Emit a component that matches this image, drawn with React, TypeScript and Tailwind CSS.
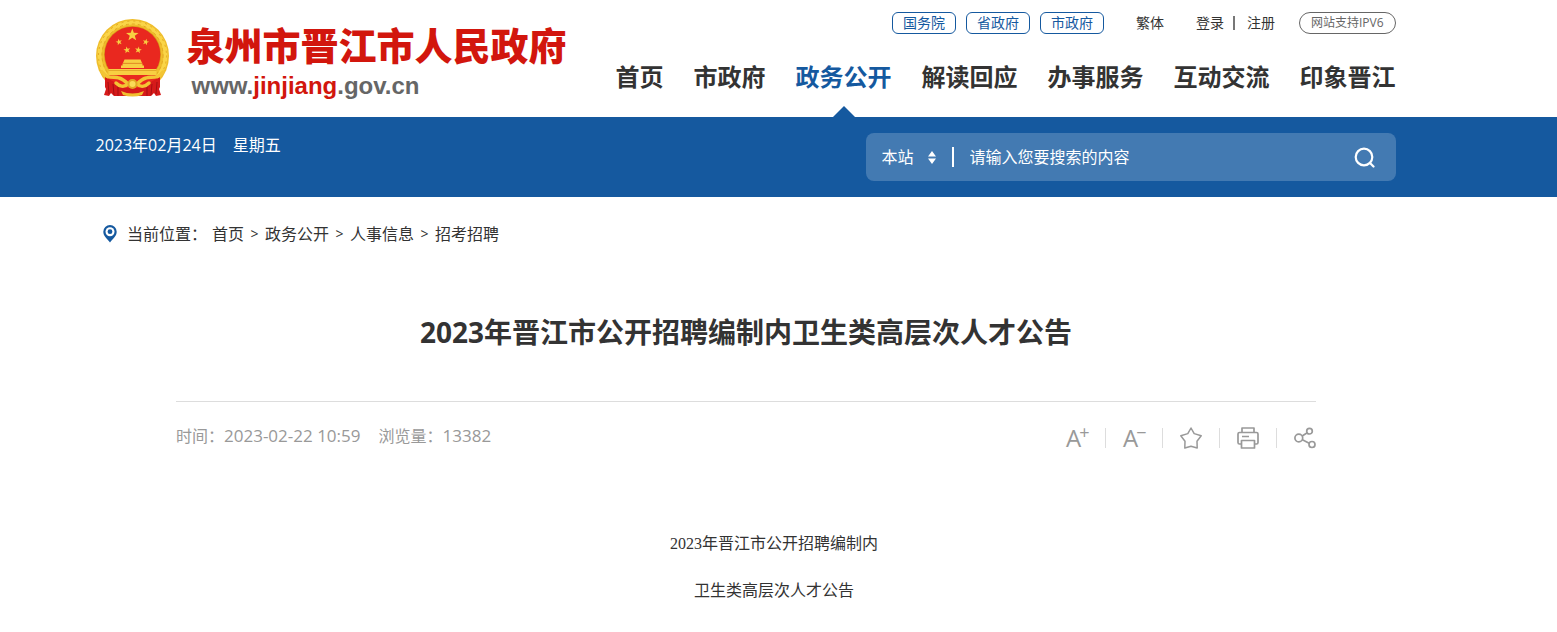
import { useState } from 'react'

const NAV = ['首页', '市政府', '政务公开', '解读回应', '办事服务', '互动交流', '印象晋江']
const GOV_LINKS = ['国务院', '省政府', '市政府']
const CRUMBS = ['首页', '政务公开', '人事信息', '招考招聘']

const STAR = 'M0 -1 L.235 -.324 L.951 -.309 L.38 .124 L.588 .809 L0 .4 L-.588 .809 L-.38 .124 L-.951 -.309 L-.235 -.324 Z'

function Emblem() {
  return (
    <svg viewBox="0 0 74 80" className="h-20 w-[74px] shrink-0" aria-hidden="true">
      {/* wheat ring */}
      <ellipse cx="36.5" cy="38" rx="36.5" ry="37" fill="#efbd2b" />
      <ellipse cx="36.5" cy="37.5" rx="33" ry="33" fill="none" stroke="#fad548" strokeWidth="4" />
      <ellipse cx="36.5" cy="37.5" rx="34" ry="34.5" fill="none" stroke="#e3a923" strokeWidth="1" strokeDasharray="2 4" />
      <ellipse cx="36.5" cy="37" rx="30.5" ry="31" fill="none" stroke="#e3a923" strokeWidth="1" strokeDasharray="3 3" />
      <circle cx="36.5" cy="36.5" r="28.5" fill="#d99a1c" />
      <circle cx="36.5" cy="36.5" r="27.8" fill="#e9281f" />
      <g fill="#f8cf42">
        <path d={STAR} transform="translate(36.3 17) scale(6.6)" />
        <path d={STAR} transform="translate(23 24) rotate(-15) scale(3.4)" />
        <path d={STAR} transform="translate(49.8 24) rotate(15) scale(3.4)" />
        <path d={STAR} transform="translate(31 32) rotate(-10) scale(3.6)" />
        <path d={STAR} transform="translate(42.3 32) rotate(10) scale(3.6)" />
        {/* gate */}
        <path d="M28.500 41.500h16l1.500 3.500h-19zM26.500 45.500h20v2h1.500v2.500H25v-2.500h1.500z" />
        <path d="M12.500 51h48v6h-48z" />
      </g>
      <path d="M27 45.300h19M12.500 52.500h48" stroke="#dd9f24" strokeWidth=".8" />
      <path d="M10 57h53l-4 8-12 5H26l-12-5z" fill="#e9281f" />
      {/* ribbons */}
      <path d="M9 59l13 7 7 3 1 9H18l-3-3-2 3-5-1 2-6-1-2z" fill="#d61a1a" />
      <path d="M64 59l-13 7-7 3-1 9h12l3-3 2 3 5-1-2-6 1-2z" fill="#d61a1a" />
      <path d="M12 64l1 12M17 66l1 11M22 68v10M61 64l-1 12M56 66l-1 11M51 68v10" stroke="#a50f12" strokeWidth="1" />
      <path d="M27 70h19v8H27z" fill="#d61a1a" />
      <path
        d="M6 54c6 8 12 4 17 6 4 1 7 4 9 6-4 4-9 2-12-1M67 54c-6 8-12 4-17 6-4 1-7 4-9 6 4 4 9 2 12-1"
        fill="none"
        stroke="#f3c534"
        strokeWidth="3.500"
        strokeLinecap="round"
      />
      <circle cx="36.500" cy="66" r="5" fill="#e2a925" />
      <circle cx="36.500" cy="66" r="3" fill="#fadb58" />
      <path d="M25 73q11.500 5 23 0l-2 4q-9.500 3-19 0z" fill="#f0bf30" />
    </svg>
  )
}

function PinIcon() {
  return (
    <svg viewBox="0 0 14 18" className="h-[18px] w-3.5 shrink-0" aria-hidden="true">
      <path d="M7 0a6.7 6.7 0 0 1 6.7 6.7C13.7 11 10 13.500 7 17.500 4 13.500.3 11 .3 6.700A6.700 6.700 0 0 1 7 0z" fill="#15599f" />
      <circle cx="7" cy="6.700" r="4.500" fill="#fff" />
      <circle cx="7" cy="6.700" r="2.400" fill="#15599f" />
    </svg>
  )
}

function StarIcon() {
  return (
    <svg viewBox="0 0 22 22" className="size-[22px]" fill="none" stroke="#999" strokeWidth="1.500" strokeLinejoin="round" aria-hidden="true">
      <path d="M11 1 14.200 6.600 21.200 8.800 17 14.200 17.200 21 11 19.200 4.800 21 5 14.200 .8 8.800 7.800 6.600Z" />
    </svg>
  )
}

function PrintIcon() {
  return (
    <svg viewBox="0 0 22 22" className="size-[22px]" fill="none" stroke="#999" strokeWidth="1.700" strokeLinejoin="round" aria-hidden="true">
      <path d="M5 5.500V1h12v4.500M5 17H2.500Q1 17 1 15.500V7Q1 5.500 2.500 5.500h17Q21 5.500 21 7v8.500q0 1.500-1.500 1.500H17" />
      <path d="M4.500 13.500h13v7.500h-13zM5 9.500h7" />
    </svg>
  )
}

function ShareIcon() {
  return (
    <svg viewBox="0 0 22 22" className="size-[22px]" fill="none" stroke="#999" strokeWidth="1.700" aria-hidden="true">
      <circle cx="4.800" cy="11" r="3.900" />
      <circle cx="15.500" cy="4.200" r="2.800" />
      <circle cx="18" cy="17.500" r="3" />
      <path d="M8.200 9l5-3.300M8.400 12.700l6.800 3.500" />
    </svg>
  )
}

function Header() {
  return (
    <header className="pr-[66px]">
      <div className="mx-auto flex max-w-[1300px] justify-between">
        <a href="#" className="flex gap-[17px] pt-[18px]">
          <Emblem />
          <span className="flex flex-col pt-[3px]">
            <span className="text-[38px] leading-12 font-black whitespace-nowrap text-[#d2160d]">泉州市晋江市人民政府</span>
            <span className="pt-px pl-[5px] font-['Liberation_Sans'] text-2xl leading-8 font-bold text-[#666]">
              www.<span className="text-[#d2160d]">jinjiang</span>.gov.cn
            </span>
          </span>
        </a>
        <div className="flex flex-col items-end pt-3">
          <div className="flex items-center text-sm leading-5 whitespace-nowrap">
            <div className="flex gap-2.5">
              {GOV_LINKS.map(l => (
                <a key={l} href="#" className="flex h-[22px] w-16 items-center justify-center rounded-md border border-[#15599f] text-[#15599f]">
                  {l}
                </a>
              ))}
            </div>
            <a href="#" className="ml-8">繁体</a>
            <a href="#" className="ml-8">登录</a>
            <span className="mr-3 ml-[9px] h-3.5 w-0.5 bg-[#777]" />
            <a href="#" className="mr-6">注册</a>
            <a href="#" className="flex h-[22px] items-center rounded-full border border-[#666] px-[11px] text-xs text-[#666]">
              网站支持IPV6
            </a>
          </div>
          <nav className="mt-[3px] flex gap-[30px] text-2xl leading-20 font-bold whitespace-nowrap">
            {NAV.map(n => {
              const isActive = n === '政务公开'
              return (
                <a key={n} href="#" className={isActive ? 'relative text-[#15599f]' : ''}>
                  {n}
                  {isActive && (
                    <svg viewBox="0 0 22 11" className="absolute bottom-0 left-1/2 h-[11px] w-[22px] -translate-x-1/2" aria-hidden="true">
                      <path d="M11 0 22 11H0z" fill="#15599f" />
                    </svg>
                  )}
                </a>
              )
            })}
          </nav>
        </div>
      </div>
    </header>
  )
}

function SearchBar() {
  const [query, setQuery] = useState('')

  return (
    <div className="bg-[#15599f] pr-[66px] text-white">
      <div className="mx-auto flex max-w-[1300px] justify-between pt-4 pb-4">
        <p className="leading-6">2023年02月24日　星期五</p>
        <form onSubmit={e => e.preventDefault()} className="flex h-12 w-[530px] items-center rounded-lg bg-white/20 pl-4">
          <select aria-label="搜索范围" className="h-8 w-10 appearance-none bg-transparent text-white focus:outline-none">
            <option>本站</option>
          </select>
          <svg viewBox="0 0 8 13" className="ml-1.5 h-[13px] w-2" fill="#fff" aria-hidden="true">
            <path d="M4 0 8 5.500H0zM4 13 8 7.500H0z" />
          </svg>
          <span className="mx-4 h-5 w-0.5 bg-white" />
          <input
            type="text"
            aria-label="搜索"
            placeholder="请输入您要搜索的内容"
            value={query}
            onChange={e => setQuery(e.target.value)}
            className="h-8 min-w-0 flex-1 bg-transparent placeholder:text-white focus:outline-none"
          />
          <button type="submit" aria-label="搜索" className="mr-5 cursor-pointer">
            <svg viewBox="0 0 22 22" className="size-[22px]" fill="none" stroke="#fff" strokeWidth="2.200" strokeLinecap="round" aria-hidden="true">
              <circle cx="10" cy="11" r="8.300" />
              <path d="M16.200 17.200l3.300 3.300" />
            </svg>
          </button>
        </form>
      </div>
    </div>
  )
}

function Tools() {
  const divider = <span className="h-5 w-px bg-[#ddd]" />

  return (
    <div className="mt-0.5 flex items-center gap-[17px] text-2xl leading-6">
      <button aria-label="放大字体" className="flex w-[22px] cursor-pointer font-medium">
        A<sup className="top-0 -ml-0.5 text-lg leading-3">+</sup>
      </button>
      {divider}
      <button aria-label="缩小字体" className="flex w-[22px] cursor-pointer font-medium">
        A<sup className="top-0 -ml-0.5 text-lg leading-3">−</sup>
      </button>
      {divider}
      <button aria-label="收藏" className="cursor-pointer"><StarIcon /></button>
      {divider}
      <button aria-label="打印" className="cursor-pointer"><PrintIcon /></button>
      {divider}
      <button aria-label="分享" className="cursor-pointer"><ShareIcon /></button>
    </div>
  )
}

export default function App() {
  return (
    <div className="min-h-screen bg-white font-['Open_Sans','Noto_Sans_CJK_SC',sans-serif] text-base text-[#333]">
      <Header />
      <SearchBar />
      <main className="pr-[65px]">
        <div className="mx-auto max-w-[1300px]">
          {/* Breadcrumb */}
          <div className="flex items-center pt-[25px] pl-[7px] leading-6">
            <PinIcon />
            <span className="mr-[5px] ml-2.5">当前位置：</span>
            {CRUMBS.map((c, i) => (
              <span key={c} className="flex">
                {i > 0 && <span className="w-[21px] text-center text-sm leading-6">&gt;</span>}
                <a href="#">{c}</a>
              </span>
            ))}
          </div>

          <article className="mx-20 pt-[62px]">
            <h1 className="text-center text-[28px] leading-12 font-bold">2023年晋江市公开招聘编制内卫生类高层次人才公告</h1>
            <div className="mt-[45px] flex items-start justify-between border-t border-[#ddd] pt-[22px] text-[#999]">
              <p className="flex gap-[18px] leading-6">
                <span>时间：<span className="text-[17px]">2023-02-22 10:59</span></span>
                <span>浏览量：<span className="text-[17px]">13382</span></span>
              </p>
              <Tools />
            </div>
            <div className="pt-[70px] pb-4 pl-14 text-center font-['Liberation_Serif','Noto_Sans_CJK_SC',serif] leading-[47px]">
              <p>2023年晋江市公开招聘编制内</p>
              <p>卫生类高层次人才公告</p>
            </div>
          </article>
        </div>
      </main>
    </div>
  )
}
